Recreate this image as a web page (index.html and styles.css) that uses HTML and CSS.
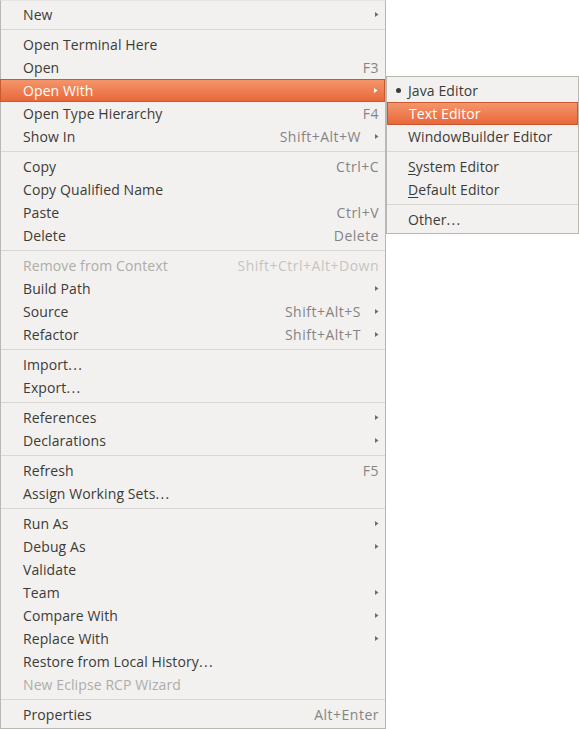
FILE: index.html
```html
<!DOCTYPE html>
<html>
<head>
<meta charset="utf-8">
<link rel="stylesheet" href="styles.css">
</head>
<body>
<div class="desk">
  <div class="menu main">
    <div class="item"><span class="lbl">New</span><span class="arr"><svg viewBox="0 0 4 7" width="4" height="7"><polygon points="0,1 3.5,3.5 0,6"/></svg></span></div>
    <div class="sep"></div>
    <div class="item"><span class="lbl">Open Terminal Here</span></div>
    <div class="item"><span class="lbl">Open</span><span class="key">F3</span></div>
    <div class="item hl"><span class="lbl">Open With</span><span class="arr"><svg viewBox="0 0 4 7" width="4" height="7"><polygon points="0,1 3.5,3.5 0,6"/></svg></span></div>
    <div class="item"><span class="lbl">Open Type Hierarchy</span><span class="key">F4</span></div>
    <div class="item"><span class="lbl">Show In</span><span class="key">Shift+Alt+W</span><span class="arr"><svg viewBox="0 0 4 7" width="4" height="7"><polygon points="0,1 3.5,3.5 0,6"/></svg></span></div>
    <div class="sep"></div>
    <div class="item"><span class="lbl">Copy</span><span class="key">Ctrl+C</span></div>
    <div class="item"><span class="lbl">Copy Qualified Name</span></div>
    <div class="item"><span class="lbl">Paste</span><span class="key">Ctrl+V</span></div>
    <div class="item"><span class="lbl">Delete</span><span class="key">Delete</span></div>
    <div class="sep"></div>
    <div class="item dis"><span class="lbl">Remove from Context</span><span class="key">Shift+Ctrl+Alt+Down</span></div>
    <div class="item"><span class="lbl">Build Path</span><span class="arr"><svg viewBox="0 0 4 7" width="4" height="7"><polygon points="0,1 3.5,3.5 0,6"/></svg></span></div>
    <div class="item"><span class="lbl">Source</span><span class="key">Shift+Alt+S</span><span class="arr"><svg viewBox="0 0 4 7" width="4" height="7"><polygon points="0,1 3.5,3.5 0,6"/></svg></span></div>
    <div class="item"><span class="lbl">Refactor</span><span class="key">Shift+Alt+T</span><span class="arr"><svg viewBox="0 0 4 7" width="4" height="7"><polygon points="0,1 3.5,3.5 0,6"/></svg></span></div>
    <div class="sep"></div>
    <div class="item"><span class="lbl">Import<span class="dots">...</span></span></div>
    <div class="item"><span class="lbl">Export<span class="dots">...</span></span></div>
    <div class="sep"></div>
    <div class="item"><span class="lbl">References</span><span class="arr"><svg viewBox="0 0 4 7" width="4" height="7"><polygon points="0,1 3.5,3.5 0,6"/></svg></span></div>
    <div class="item"><span class="lbl">Declarations</span><span class="arr"><svg viewBox="0 0 4 7" width="4" height="7"><polygon points="0,1 3.5,3.5 0,6"/></svg></span></div>
    <div class="sep"></div>
    <div class="item"><span class="lbl">Refresh</span><span class="key">F5</span></div>
    <div class="item"><span class="lbl">Assign Working Sets<span class="dots">...</span></span></div>
    <div class="sep"></div>
    <div class="item"><span class="lbl">Run As</span><span class="arr"><svg viewBox="0 0 4 7" width="4" height="7"><polygon points="0,1 3.5,3.5 0,6"/></svg></span></div>
    <div class="item"><span class="lbl">Debug As</span><span class="arr"><svg viewBox="0 0 4 7" width="4" height="7"><polygon points="0,1 3.5,3.5 0,6"/></svg></span></div>
    <div class="item"><span class="lbl">Validate</span></div>
    <div class="item"><span class="lbl">Team</span><span class="arr"><svg viewBox="0 0 4 7" width="4" height="7"><polygon points="0,1 3.5,3.5 0,6"/></svg></span></div>
    <div class="item"><span class="lbl">Compare With</span><span class="arr"><svg viewBox="0 0 4 7" width="4" height="7"><polygon points="0,1 3.5,3.5 0,6"/></svg></span></div>
    <div class="item"><span class="lbl">Replace With</span><span class="arr"><svg viewBox="0 0 4 7" width="4" height="7"><polygon points="0,1 3.5,3.5 0,6"/></svg></span></div>
    <div class="item"><span class="lbl">Restore from Local History<span class="dots">...</span></span></div>
    <div class="item dis"><span class="lbl">New Eclipse RCP Wizard</span></div>
    <div class="sep"></div>
    <div class="item"><span class="lbl">Properties</span><span class="key">Alt+Enter</span></div>
  </div>
  <div class="menu sub">
    <div class="item"><span class="dot"></span><span class="lbl">Java Editor</span></div>
    <div class="item hl"><span class="lbl">Text Editor</span></div>
    <div class="item"><span class="lbl">WindowBuilder Editor</span></div>
    <div class="sep"></div>
    <div class="item"><span class="lbl"><span class="mn">S</span>ystem Editor</span></div>
    <div class="item"><span class="lbl"><span class="mn">D</span>efault Editor</span></div>
    <div class="sep"></div>
    <div class="item"><span class="lbl">Other<span class="dots">...</span></span></div>
  </div>
</div>
</body>
</html>
```

FILE: styles.css
```css
html, body {
  margin: 0;
  padding: 0;
  background: #ffffff;
}

.desk {
  display: flex;
  align-items: flex-start;
  font-family: "Open Sans", "Noto Sans", sans-serif;
  font-size: 14px;
  letter-spacing: 0.1px;
  color: #3c3b37;
}

.menu {
  display: flex;
  flex-direction: column;
  background: #f2f1f0;
  border: 1px solid #b9b7b2;
  padding: 2px 0;
  box-sizing: border-box;
}

.main {
  width: 386px;
  border-top-color: #e6e4e1;
}

.sub {
  width: 193px;
  margin-top: 76px;
}

.item {
  display: flex;
  align-items: center;
  height: 23px;
  line-height: 23px;
  padding: 0 6px 0 22px;
  white-space: nowrap;
  box-sizing: border-box;
}

.main .hl {
  margin: 0 0 0 -1px;
  padding-left: 22px;
}

.sub .item {
  padding-left: 21px;
  position: relative;
}

.lbl {
  padding-bottom: 1px;
}

.dots {
  letter-spacing: 1.3px;
}

.key {
  margin-left: auto;
  color: #858482;
  letter-spacing: 0.5px;
  padding-bottom: 1px;
}

.key + .arr {
  margin-left: 14px;
}

.arr {
  margin-left: auto;
  width: 4px;
  height: 7px;
  display: flex;
}

.arr svg {
  display: block;
  fill: #6f6e6b;
}

.sep {
  height: 7px;
  display: flex;
  align-items: center;
}

.sep::before {
  content: "";
  display: block;
  width: 100%;
  height: 1px;
  background: #d9d7d3;
}

.dis {
  color: #aeaca8;
}

.dis .key {
  color: #c6c4c0;
}

.hl {
  color: #ffffff;
  background: linear-gradient(#f4956a, #e9683a);
  border: 1px solid #c9592f;
}

.hl .arr svg {
  fill: #ffffff;
}

.dot {
  position: absolute;
  left: 9px;
  top: 9px;
  width: 5px;
  height: 5px;
  border-radius: 50%;
  background: #3c3b37;
}

.mn {
  text-decoration: underline;
  text-underline-offset: 2px;
}
```
